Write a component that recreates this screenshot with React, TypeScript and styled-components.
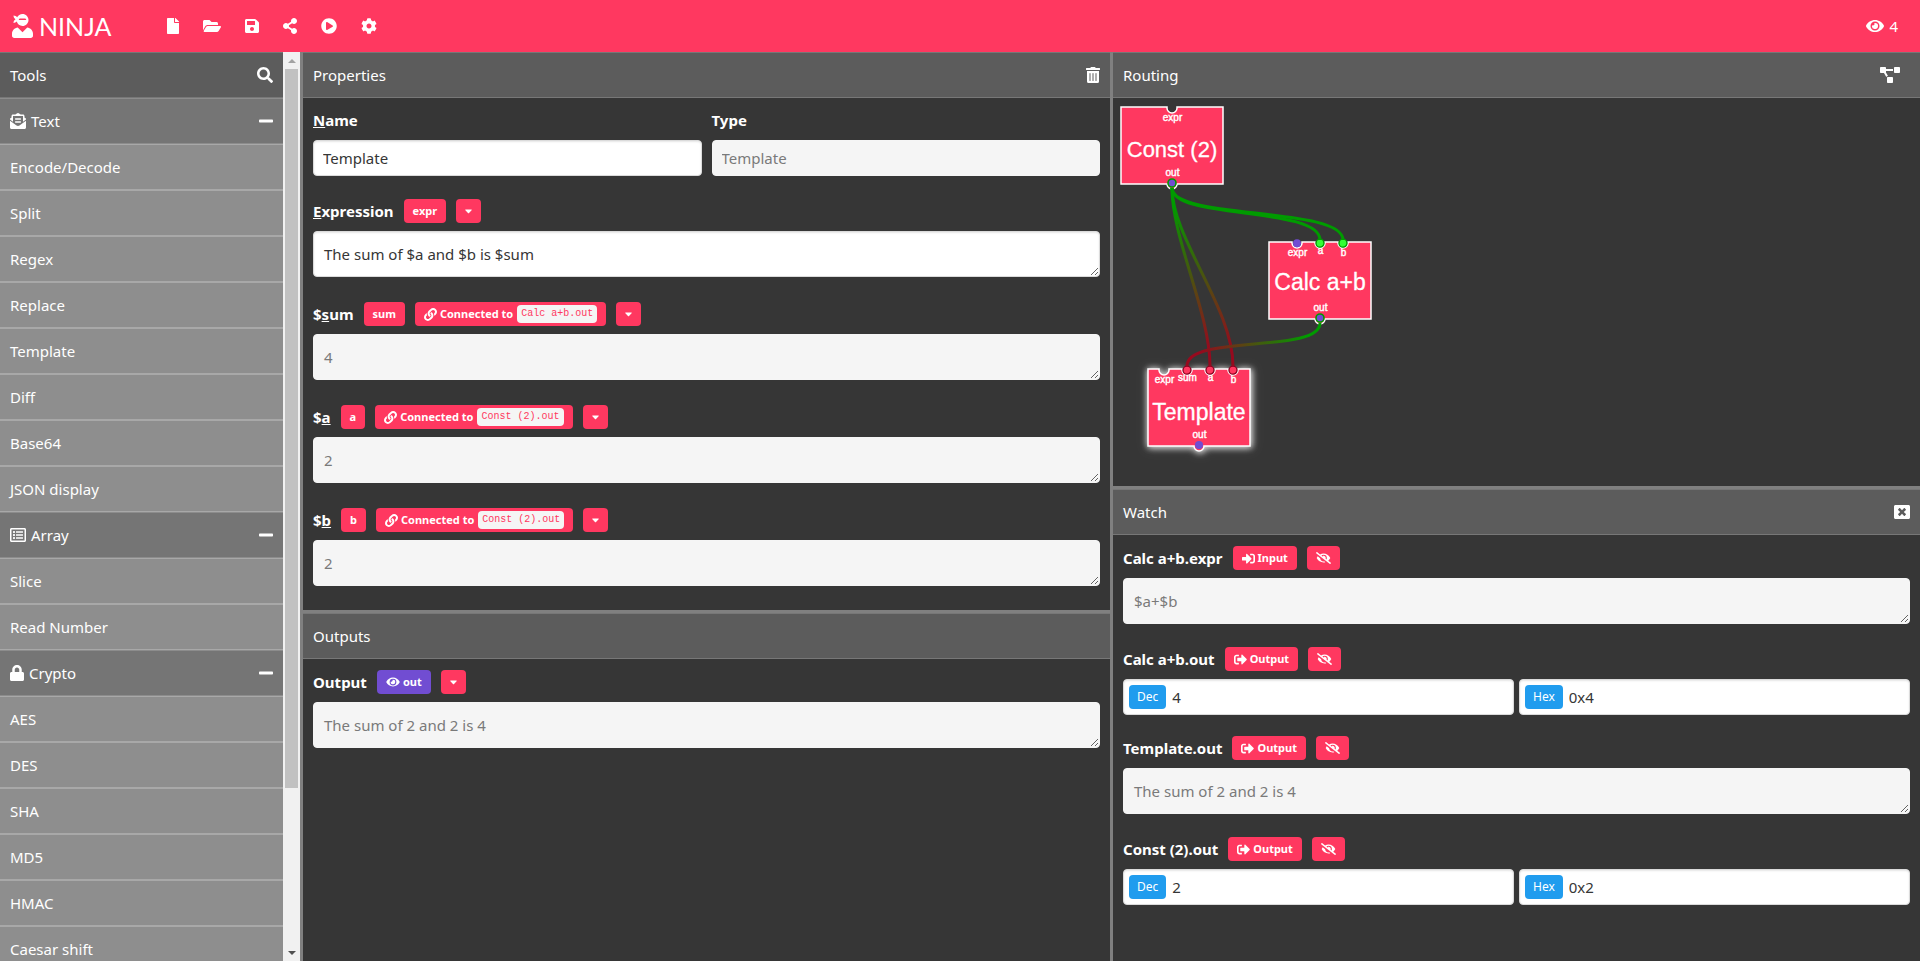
import React from 'react';
import styled, { createGlobalStyle, css } from 'styled-components';
import type { IconType } from 'react-icons';
import {
  FaCaretDown,
  FaCog,
  FaEnvelopeOpenText,
  FaEye,
  FaEyeSlash,
  FaFile,
  FaFolderOpen,
  FaLink,
  FaLock,
  FaMinus,
  FaPlayCircle,
  FaProjectDiagram,
  FaRegListAlt,
  FaSave,
  FaSearch,
  FaShareAlt,
  FaSignInAlt,
  FaSignOutAlt,
  FaTrashAlt,
  FaUserNinja,
  FaWindowClose,
} from 'react-icons/fa';

const PINK = '#ff3860';
const PURPLE = '#714dd2';
const DARK = '#363636';
const GREEN = '#009b00';
const RED = '#960a1e';

const GlobalStyle = createGlobalStyle`
  *, *::before, *::after { box-sizing: border-box; }
  body {
    margin: 0;
    background: ${DARK};
    color: #fff;
    font: 15px/24px "Noto Sans", "Open Sans", sans-serif;
    overflow: hidden;
  }
  button, input, textarea { font: inherit; }
`;

const IconBox = styled.span<{ $w: number; $h: number }>`
  display: block;
  flex: none;
  svg {
    display: block;
    width: ${(p) => p.$w}px;
    height: ${(p) => p.$h}px;
  }
`;

interface IconProps {
  of: IconType;
  w: number;
  h?: number;
}

function Icon({ of: Glyph, w, h = 16 }: IconProps) {
  return (
    <IconBox $w={w} $h={h}>
      <Glyph />
    </IconBox>
  );
}

const Page = styled.div`
  display: flex;
  flex-direction: column;
  height: 100vh;
`;

const TopBar = styled.header`
  display: flex;
  align-items: center;
  height: 52px;
  flex: none;
  padding: 0 22px 0 12px;
  background: ${PINK};
`;

const Brand = styled.a`
  display: flex;
  align-items: center;
  gap: 6px;
  width: 101px;
  color: #fff;
  text-decoration: none;
  font: 400 25px/32px Lato, sans-serif;
`;

const Actions = styled.nav`
  display: flex;
  gap: 24px;
  margin-left: 54px;
`;

const IconButton = styled.button`
  display: flex;
  align-items: center;
  gap: 5px;
  padding: 0;
  border: 0;
  background: none;
  color: #fff;
  cursor: pointer;
`;

const WatchCount = styled(IconButton)`
  margin-left: auto;
`;

const ArrangeButton = styled(IconButton)`
  padding-right: 10px;
`;

const Workspace = styled.div`
  display: grid;
  grid-template-columns: 300px minmax(0, 1fr) minmax(0, 1fr);
  column-gap: 3px;
  flex: 1;
  min-height: 0;
  background: #808080;
`;

const Sidebar = styled.aside`
  display: flex;
  min-height: 0;
`;

const ToolList = styled.div`
  flex: 1;
  min-width: 0;
  overflow: hidden;
`;

const bar = css`
  display: flex;
  align-items: center;
  height: 46px;
  padding: 0 10px;
  border: solid;
  border-width: 1px 0;
`;

const PanelHeader = styled.div`
  ${bar}
  flex: none;
  justify-content: space-between;
  background: #5c5c5c;
  border-color: #777;
`;

const PanelTitle = styled.h2`
  margin: 0;
  font: inherit;
`;

const Category = styled.button`
  ${bar}
  width: 100%;
  gap: 5px;
  background: #757575;
  border-color: #8c8c8c;
  color: #fff;
  cursor: pointer;
  > :last-child {
    margin-left: auto;
  }
`;

const Tool = styled.button`
  ${bar}
  width: 100%;
  background: #8e8e8e;
  border-color: #a8a8a8;
  color: #fff;
  cursor: pointer;
`;

const ScrollBar = styled.div`
  display: flex;
  flex-direction: column;
  width: 17px;
  background: #f1f1f1;
`;

const ScrollArrow = styled.div<{ $down?: boolean }>`
  display: flex;
  flex: none;
  align-items: center;
  justify-content: center;
  height: 17px;
  &::before {
    content: '';
    border: solid transparent;
    border-width: 0 4px;
    ${(p) => (p.$down ? 'border-top: 4px solid #505050;' : 'border-bottom: 4px solid #a3a3a3;')}
  }
`;

const ScrollTrack = styled.div`
  flex: 1;
  padding: 0 2px;
`;

const ScrollThumb = styled.div`
  height: 82.2%;
  background: #c1c1c1;
`;

const Column = styled.div<{ $rows: string }>`
  display: grid;
  grid-template-rows: ${(p) => p.$rows};
  row-gap: 3px;
  min-height: 0;
`;

const Panel = styled.section`
  display: flex;
  flex-direction: column;
  min-height: 0;
  background: ${DARK};
  overflow: hidden;
`;

const Fields = styled.div<{ $gap: number }>`
  display: flex;
  flex-direction: column;
  gap: ${(p) => p.$gap}px;
  padding: 11px 10px;
`;

const NameRow = styled.div`
  display: grid;
  grid-template-columns: 1fr 1fr;
  gap: 10px;
  margin-top: -1px;
`;

const Field = styled.div`
  display: flex;
  flex-direction: column;
  gap: 8px;
  min-width: 0;
`;

const FieldHead = styled.div`
  display: flex;
  align-items: center;
  gap: 10px;
  height: 24px;
`;

const Label = styled.label`
  font-weight: 700;
`;

const Tag = styled.button<{ $color?: string }>`
  display: flex;
  align-items: center;
  gap: 3px;
  height: 24px;
  padding: 0 9px;
  border: 0;
  border-radius: 4px;
  background: ${(p) => p.$color ?? PINK};
  color: #fff;
  font-size: 11px;
  line-height: 24px;
  font-weight: 700;
  cursor: pointer;
`;

const Code = styled.code`
  margin-left: 1px;
  padding: 0 4px;
  border-radius: 4px;
  background: #f5f5f5;
  color: ${PINK};
  font: 400 10px/18px "Liberation Mono", monospace;
`;

const box = css`
  border: 1px solid #dbdbdb;
  border-radius: 4px;
  background: #fff;
  color: ${DARK};
  box-shadow: inset 0 1px 2px rgba(10, 10, 10, 0.1);
  outline: 0;
`;

const disabledBox = css`
  &:disabled {
    background: #f5f5f5;
    border-color: #f5f5f5;
    box-shadow: none;
    color: #7a7a7a;
  }
`;

const TextInput = styled.input`
  ${box}
  ${disabledBox}
  width: 100%;
  height: 36px;
  padding: 0 9px;
`;

const TextArea = styled.textarea`
  ${box}
  ${disabledBox}
  display: block;
  width: 100%;
  height: 46px;
  min-height: 46px;
  margin-bottom: 2px;
  padding: 10px;
  line-height: 24px;
  resize: vertical;
  overflow: hidden;
`;

const NumberRow = styled.div`
  display: grid;
  grid-template-columns: 1fr 1fr;
  gap: 5px;
`;

const NumberBox = styled.label`
  ${box}
  display: flex;
  align-items: center;
  gap: 6px;
  height: 36px;
  padding: 0 5px;
`;

const Base = styled.span`
  padding: 0 8px;
  border-radius: 4px;
  background: #209cee;
  color: #fff;
  font-size: 12px;
  line-height: 24px;
`;

const NumberInput = styled.input`
  flex: 1;
  min-width: 0;
  padding: 0;
  border: 0;
  outline: 0;
  background: none;
  color: ${DARK};
`;

const Canvas = styled.svg`
  display: block;
  flex: 1;
  width: 100%;
  min-height: 0;
  font-family: "Liberation Sans", Arial, sans-serif;
  text-anchor: middle;
  fill: #fff;
`;

const tools = [
  {
    name: 'Text',
    icon: <Icon of={FaEnvelopeOpenText} w={16} />,
    items: ['Encode/Decode', 'Split', 'Regex', 'Replace', 'Template', 'Diff', 'Base64', 'JSON display'],
  },
  { name: 'Array', icon: <Icon of={FaRegListAlt} w={16} />, items: ['Slice', 'Read Number'] },
  {
    name: 'Crypto',
    icon: <Icon of={FaLock} w={14} />,
    items: ['AES', 'DES', 'SHA', 'MD5', 'HMAC', 'Caesar shift'],
  },
];

const variables = [
  { name: 'sum', source: 'Calc a+b.out', value: '4' },
  { name: 'a', source: 'Const (2).out', value: '2' },
  { name: 'b', source: 'Const (2).out', value: '2' },
];

type PortState = 'empty' | 'watched' | 'active' | 'error' | 'source';

interface Port {
  label: string;
  dx: number;
  labelDy: number;
  state: PortState;
}

interface NodeProps {
  x: number;
  y: number;
  title: string;
  titleSize: number;
  titleDy: number;
  inputs: Port[];
  outState: PortState;
  selected?: boolean;
}

const portPaint: Record<PortState, { fill: string; stroke: string }> = {
  empty: { fill: 'none', stroke: 'none' },
  watched: { fill: PURPLE, stroke: 'none' },
  active: { fill: '#33ff33', stroke: GREEN },
  error: { fill: PINK, stroke: '#8c0020' },
  source: { fill: PURPLE, stroke: GREEN },
};

const NODE_W = 102;
const NODE_H = 77;

/** Node outline with a dent for each input port and a bulge for the output. */
function outline(inputs: Port[]) {
  const dents = inputs.map((p) => `H${p.dx - 5} v1 a5 5 0 0 0 10 0 v-1`).join(' ');
  const mid = NODE_W / 2;
  return `M0 0 ${dents} H${NODE_W} V${NODE_H} H${mid + 5} a5 5 0 0 1 -10 0 H0 Z`;
}

function GraphNode({ x, y, title, titleSize, titleDy, inputs, outState, selected }: NodeProps) {
  const mid = NODE_W / 2;
  return (
    <g transform={`translate(${x} ${y})`}>
      <path
        d={outline(inputs)}
        fill={PINK}
        stroke="#fff"
        strokeWidth="1.5"
        filter={selected ? 'url(#glow)' : undefined}
      />
      <text x={mid} y={titleDy} fontSize={titleSize} stroke="#fff" strokeWidth="0.3">{title}</text>
      {inputs.map((p) => (
        <text key={p.label} x={p.dx + 0.5} y={p.labelDy} fontSize="10" stroke="#fff" strokeWidth="0.4">{p.label}</text>
      ))}
      <text x={mid + 0.5} y="69" fontSize="10" stroke="#fff" strokeWidth="0.4">out</text>
      {inputs.map((p) => (
        <circle key={p.label} cx={p.dx} cy="1.2" r="4" strokeWidth="1.3" {...portPaint[p.state]} />
      ))}
      <circle cx={mid} cy={NODE_H - 1} r="4" strokeWidth="1.6" {...portPaint[outState]} />
    </g>
  );
}

function RoutingGraph() {
  return (
    <Canvas role="img" aria-label="Routing graph">
      <defs>
        <linearGradient id="fadeDown" x1="0" y1="0" x2="0" y2="1">
          <stop offset="0.1" stopColor={GREEN} />
          <stop offset="0.9" stopColor={RED} />
        </linearGradient>
        <linearGradient id="fadeLeft" x1="1" y1="0" x2="0" y2="0">
          <stop offset="0.1" stopColor={GREEN} />
          <stop offset="0.9" stopColor={RED} />
        </linearGradient>
        <filter id="glow" x="-20%" y="-25%" width="140%" height="150%">
          <feDropShadow dx="1" dy="1" stdDeviation="3" floodColor="#fff" floodOpacity="0.7" />
          <feDropShadow dx="0" dy="0" stdDeviation="3" floodColor="#fff" floodOpacity="0.5" />
        </filter>
      </defs>
      <GraphNode
        x={8}
        y={9}
        title="Const (2)"
        titleSize={22}
        titleDy={50}
        inputs={[{ label: 'expr', dx: 51, labelDy: 14, state: 'empty' }]}
        outState="source"
      />
      <GraphNode
        x={156}
        y={144}
        title="Calc a+b"
        titleSize={23}
        titleDy={48}
        inputs={[
          { label: 'expr', dx: 28, labelDy: 14, state: 'watched' },
          { label: 'a', dx: 51, labelDy: 12, state: 'active' },
          { label: 'b', dx: 74, labelDy: 14, state: 'active' },
        ]}
        outState="source"
      />
      <GraphNode
        x={35}
        y={271}
        title="Template"
        titleSize={23}
        titleDy={51}
        inputs={[
          { label: 'expr', dx: 16, labelDy: 14, state: 'empty' },
          { label: 'sum', dx: 39, labelDy: 12, state: 'error' },
          { label: 'a', dx: 62, labelDy: 12, state: 'error' },
          { label: 'b', dx: 85, labelDy: 14, state: 'error' },
        ]}
        outState="watched"
        selected
      />
      <g fill="none" strokeWidth="3">
        <path d="M59 90 C59 122 207 108 207 142" stroke={GREEN} />
        <path d="M59 90 C59 122 230 108 230 142" stroke={GREEN} />
        <path d="M59 90 C59 140 97 215 97 268" stroke="url(#fadeDown)" />
        <path d="M59 90 C59 140 120 210 120 268" stroke="url(#fadeDown)" />
        <path d="M207 225 C207 256 74 236 74 268" stroke="url(#fadeLeft)" />
      </g>
    </Canvas>
  );
}

function MenuTag({ label }: { label: string }) {
  return (
    <Tag aria-label={label}>
      <Icon of={FaCaretDown} w={7} h={12} />
    </Tag>
  );
}

interface WatchProps {
  name: string;
  kind: 'Input' | 'Output';
  value: string;
  hex?: string;
}

function WatchItem({ name, kind, value, hex }: WatchProps) {
  return (
    <Field>
      <FieldHead>
        <Label htmlFor={`watch-${name}`}>{name}</Label>
        <Tag>
          <Icon of={kind === 'Input' ? FaSignInAlt : FaSignOutAlt} w={13} h={13} />
          {kind}
        </Tag>
        <Tag aria-label={`Stop watching ${name}`}>
          <Icon of={FaEyeSlash} w={15} h={12} />
        </Tag>
      </FieldHead>
      {hex ? (
        <NumberRow>
          <NumberBox>
            <Base>Dec</Base>
            <NumberInput id={`watch-${name}`} defaultValue={value} />
          </NumberBox>
          <NumberBox>
            <Base>Hex</Base>
            <NumberInput defaultValue={hex} />
          </NumberBox>
        </NumberRow>
      ) : (
        <TextArea id={`watch-${name}`} rows={1} disabled defaultValue={value} />
      )}
    </Field>
  );
}

export default function App() {
  return (
    <Page>
      <GlobalStyle />
      <TopBar>
        <Brand href="#">
          <Icon of={FaUserNinja} w={21} h={24} />
          NINJA
        </Brand>
        <Actions>
          <IconButton aria-label="New"><Icon of={FaFile} w={12} /></IconButton>
          <IconButton aria-label="Open"><Icon of={FaFolderOpen} w={18} /></IconButton>
          <IconButton aria-label="Save"><Icon of={FaSave} w={14} /></IconButton>
          <IconButton aria-label="Share"><Icon of={FaShareAlt} w={14} /></IconButton>
          <IconButton aria-label="Run"><Icon of={FaPlayCircle} w={16} /></IconButton>
          <IconButton aria-label="Settings"><Icon of={FaCog} w={16} /></IconButton>
        </Actions>
        <WatchCount><Icon of={FaEye} w={18} />4</WatchCount>
      </TopBar>

      <Workspace>
        <Sidebar>
          <ToolList>
            <PanelHeader>
              <PanelTitle>Tools</PanelTitle>
              <IconButton aria-label="Search tools"><Icon of={FaSearch} w={16} /></IconButton>
            </PanelHeader>
            {tools.map((group) => (
              <React.Fragment key={group.name}>
                <Category aria-expanded>
                  {group.icon}
                  {group.name}
                  <Icon of={FaMinus} w={14} />
                </Category>
                {group.items.map((item) => (
                  <Tool key={item}>{item}</Tool>
                ))}
              </React.Fragment>
            ))}
          </ToolList>
          <ScrollBar aria-hidden>
            <ScrollArrow />
            <ScrollTrack>
              <ScrollThumb />
            </ScrollTrack>
            <ScrollArrow $down />
          </ScrollBar>
        </Sidebar>

        <Column $rows="minmax(0, 93fr) minmax(0, 58fr)">
          <Panel>
            <PanelHeader>
              <PanelTitle>Properties</PanelTitle>
              <IconButton aria-label="Delete"><Icon of={FaTrashAlt} w={14} /></IconButton>
            </PanelHeader>
            <Fields $gap={23}>
              <NameRow>
                <Field>
                  <Label htmlFor="name"><u>N</u>ame</Label>
                  <TextInput id="name" defaultValue="Template" />
                </Field>
                <Field>
                  <Label htmlFor="type">Type</Label>
                  <TextInput id="type" defaultValue="Template" disabled />
                </Field>
              </NameRow>
              <Field>
                <FieldHead>
                  <Label htmlFor="expression"><u>E</u>xpression</Label>
                  <Tag>expr</Tag>
                  <MenuTag label="Expression options" />
                </FieldHead>
                <TextArea id="expression" rows={1} defaultValue="The sum of $a and $b is $sum" />
              </Field>
              {variables.map((v) => (
                <Field key={v.name}>
                  <FieldHead>
                    <Label htmlFor={`var-${v.name}`}>$<u>{v.name[0]}</u>{v.name.slice(1)}</Label>
                    <Tag>{v.name}</Tag>
                    <Tag>
                      <Icon of={FaLink} w={13} h={13} />
                      Connected to
                      <Code>{v.source}</Code>
                    </Tag>
                    <MenuTag label={`${v.name} options`} />
                  </FieldHead>
                  <TextArea id={`var-${v.name}`} rows={1} disabled defaultValue={v.value} />
                </Field>
              ))}
            </Fields>
          </Panel>
          <Panel>
            <PanelHeader>
              <PanelTitle>Outputs</PanelTitle>
            </PanelHeader>
            <Fields $gap={23}>
              <Field>
                <FieldHead>
                  <Label htmlFor="output">Output</Label>
                  <Tag $color={PURPLE}><Icon of={FaEye} w={14} h={12} />out</Tag>
                  <MenuTag label="Output options" />
                </FieldHead>
                <TextArea id="output" rows={1} disabled defaultValue="The sum of 2 and 2 is 4" />
              </Field>
            </Fields>
          </Panel>
        </Column>

        <Column $rows="minmax(0, 217fr) minmax(0, 236fr)">
          <Panel>
            <PanelHeader>
              <PanelTitle>Routing</PanelTitle>
              <ArrangeButton aria-label="Arrange nodes"><Icon of={FaProjectDiagram} w={20} /></ArrangeButton>
            </PanelHeader>
            <RoutingGraph />
          </Panel>
          <Panel>
            <PanelHeader>
              <PanelTitle>Watch</PanelTitle>
              <IconButton aria-label="Close watch"><Icon of={FaWindowClose} w={16} /></IconButton>
            </PanelHeader>
            <Fields $gap={21}>
              <WatchItem name="Calc a+b.expr" kind="Input" value="$a+$b" />
              <WatchItem name="Calc a+b.out" kind="Output" value="4" hex="0x4" />
              <WatchItem name="Template.out" kind="Output" value="The sum of 2 and 2 is 4" />
              <WatchItem name="Const (2).out" kind="Output" value="2" hex="0x2" />
            </Fields>
          </Panel>
        </Column>
      </Workspace>
    </Page>
  );
}
